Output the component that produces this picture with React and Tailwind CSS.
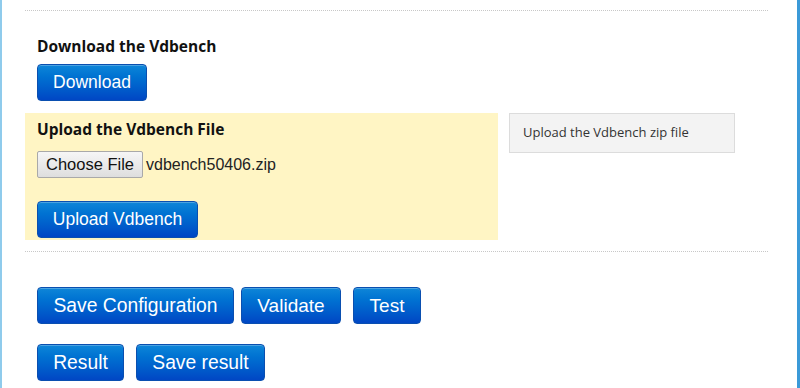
const btn =
  "whitespace-nowrap rounded-[4px] border border-[#0a4fb0] bg-gradient-to-b from-[#0f86d8] to-[#0146c4] h-[37px] leading-none text-white font-['Liberation_Sans',Arial,sans-serif] shadow-[inset_0_1px_0_rgba(255,255,255,0.25)]";

const heading = "text-[15.5px] font-bold leading-[18px] text-[#111] font-['Open_Sans',sans-serif]";

export default function App() {
  return (
    <div className="relative h-[388px] w-[800px] overflow-hidden bg-white border-l-2 border-l-[#8fcbec] border-r-[3px] border-r-[#3b9ad8]">
      <div className="pl-[23px] pr-[29px] pt-[10px]">
        <div className="border-t border-dotted border-[#c8c8c8]" />

        <div className="px-[12px] pt-[26px]">
          <h3 className={heading}>Download the Vdbench</h3>
          <button className={btn + " mt-[9px] w-[110px] text-[17.5px]"}>Download</button>
        </div>

        <div className="mt-[12px] flex gap-[11px]">
          <div className="h-[127px] w-[473px] bg-[#fff5c4] px-[12px] pt-[7px]">
            <h3 className={heading}>Upload the Vdbench File</h3>
            <div className="mt-[13px] flex items-center gap-[3px] font-['Liberation_Sans',Arial,sans-serif] text-[16px] text-[#222]">
              <button className="h-[27px] w-[106px] rounded-[2px] border border-[#a9a9a9] bg-gradient-to-b from-[#f6f6f6] to-[#dedede] text-[16.5px] text-[#111]">
                Choose File
              </button>
              <span>vdbench50406.zip</span>
            </div>
            <button className={btn + " mt-[23px] w-[161px] text-[17.5px]"}>Upload Vdbench</button>
          </div>
          <div className="flex h-[40px] w-[226px] items-center border border-[#dcdcdc] bg-[#f3f3f3] px-[13px] text-[13px] text-[#333] font-['Open_Sans',sans-serif]">
            Upload the Vdbench zip file
          </div>
        </div>

        <div className="mt-[11px] border-t border-dotted border-[#c8c8c8]" />

        <div className="px-[12px] pt-[35px]">
          <div className="flex">
            <button className={btn + " w-[197px] text-[19.3px]"}>Save Configuration</button>
            <button className={btn + " ml-[7px] w-[100px] text-[19px]"}>Validate</button>
            <button className={btn + " ml-[12px] w-[68px] text-[19px]"}>Test</button>
          </div>
          <div className="mt-[20px] flex">
            <button className={btn + " w-[87px] text-[19.3px]"}>Result</button>
            <button className={btn + " ml-[12px] w-[129px] text-[19.3px]"}>Save result</button>
          </div>
        </div>
      </div>
    </div>
  );
}
